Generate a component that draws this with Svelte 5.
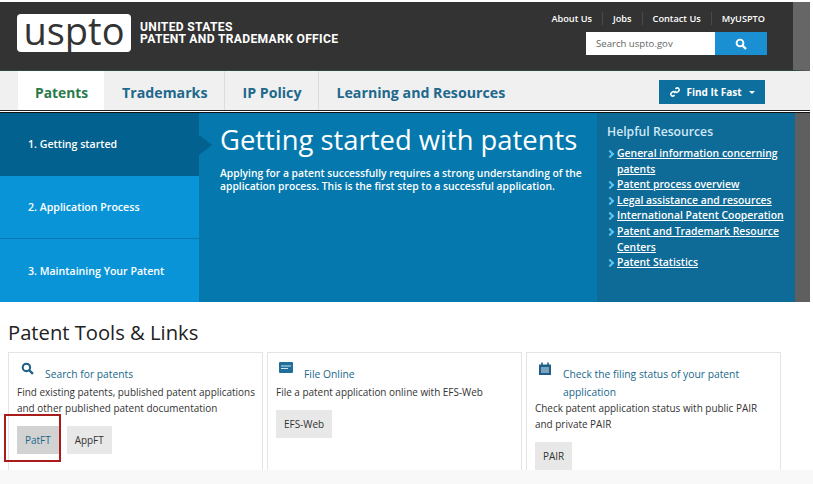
<script>
    const steps = ['1. Getting started', '2. Application Process', '3. Maintaining Your Patent'];
    const links = [
        'General information concerning patents',
        'Patent process overview',
        'Legal assistance and resources',
        'International Patent Cooperation',
        'Patent and Trademark Resource Centers',
        'Patent Statistics'
    ];
    const tabs = ['Trademarks', 'IP Policy', 'Learning and Resources'];
    const toplinks = ['About Us', 'Jobs', 'Contact Us', 'MyUSPTO'];
</script>

<div class="page">
    <header class="head">
        <div class="brand">
            <div class="logo">uspto</div>
            <div class="office">UNITED STATES<br>PATENT AND TRADEMARK OFFICE</div>
        </div>
        <div class="tools">
            <nav class="toplinks">
                {#each toplinks as t}
                    <span>{t}</span>
                {/each}
            </nav>
            <div class="search">
                <span class="field">Search uspto.gov</span>
                <span class="go">
                    <svg width="12" height="12" viewBox="0 0 12 12"><circle cx="5" cy="5" r="3.4" fill="none" stroke="#fff" stroke-width="1.9"/><path d="M7.6 7.6L11 11" stroke="#fff" stroke-width="2.2"/></svg>
                </span>
            </div>
        </div>
    </header>

    <nav class="tabs">
        <span class="tab active">Patents</span>
        {#each tabs as t}
            <span class="tab">{t}</span>
        {/each}
        <span class="find">
            <svg width="12" height="12" viewBox="0 0 12 12" fill="none" stroke="#fff" stroke-width="1.6"><path d="M5 7l2-2"/><path d="M6.5 3l1-1a2 2 0 0 1 2.6 2.6l-1.4 1.4a2 2 0 0 1-2.2.3"/><path d="M5.5 9l-1 1a2 2 0 0 1-2.6-2.6l1.4-1.4a2 2 0 0 1 2.2-.3"/></svg>
            Find It Fast
            <i class="caret"></i>
        </span>
    </nav>

    <section class="hero">
        <div class="steps">
            {#each steps as s, i}
                <div class="step" class:current={i === 0}>{s}</div>
            {/each}
        </div>
        <div class="intro">
            <h1>Getting started with patents</h1>
            <p>Applying for a patent successfully requires a strong understanding of the application process. This is the first step to a successful application.</p>
        </div>
        <aside class="help">
            <h2>Helpful Resources</h2>
            <ul>
                {#each links as l}
                    <li><a href="#top">{l}</a></li>
                {/each}
            </ul>
        </aside>
    </section>

    <section class="tools-sec">
        <h3>Patent Tools &amp; Links</h3>
        <div class="cards">
            <div class="card">
                <div class="title">
                    <span class="ico">
                        <svg width="13" height="13" viewBox="0 0 12 12"><circle cx="5" cy="5" r="3.4" fill="none" stroke="#1f5f8a" stroke-width="1.9"/><path d="M7.6 7.6L11 11" stroke="#1f5f8a" stroke-width="2.2"/></svg>
                    </span>
                    <span>Search for patents</span>
                </div>
                <p>Find existing patents, published patent applications and other published patent documentation</p>
                <div class="btns">
                    <span class="btn on">PatFT</span>
                    <span class="btn">AppFT</span>
                </div>
            </div>
            <div class="card">
                <div class="title">
                    <span class="ico">
                        <svg width="14" height="11" viewBox="0 0 14 11"><rect width="14" height="11" rx="1" fill="#1f6f9a"/><path d="M2 4h10M2 6.5h7" stroke="#cfe6f2" stroke-width="1"/></svg>
                    </span>
                    <span>File Online</span>
                </div>
                <p>File a patent application online with EFS-Web</p>
                <div class="btns">
                    <span class="btn">EFS-Web</span>
                </div>
            </div>
            <div class="card">
                <div class="title">
                    <span class="ico">
                        <svg width="12" height="13" viewBox="0 0 12 13"><path d="M0 2.5h12V13H0z" fill="#1f5f8a"/><path d="M3 0.5v3M9 0.5v3" stroke="#1f5f8a" stroke-width="1.6"/><path d="M2 6h8M2 8h8M2 10h8" stroke="#d5e6f0" stroke-width="1"/></svg>
                    </span>
                    <span>Check the filing status of your patent application</span>
                </div>
                <p class="tight">Check patent application status with public PAIR and private PAIR</p>
                <div class="btns">
                    <span class="btn">PAIR</span>
                </div>
            </div>
        </div>
        <div class="foot"></div>
    </section>

    <div class="redbox"></div>
</div>

<style>
    :global(body) {
        margin: 0;
        background: #fff;
    }
    .page {
        position: relative;
        width: 813px;
        height: 484px;
        overflow: hidden;
        background: #fff;
        padding-top: 2px;
        box-sizing: border-box;
        font-family: "Open Sans", "Liberation Sans", sans-serif;
    }
    .head {
        height: 68px;
        width: 793px;
        border-right: 17px solid #666;
        background: #333;
        border-bottom: 1px solid #2c4a3e;
        display: flex;
        justify-content: space-between;
    }
    .brand {
        display: flex;
        align-items: center;
        padding: 12px 0 0 17px;
        height: 38px;
        gap: 9px;
    }
    .logo {
        width: 114px;
        height: 38px;
        background: #fff;
        border-radius: 4px;
        color: #333;
        font-size: 38px;
        line-height: 33px;
        text-align: center;
        font-weight: 500;
        font-family: "Open Sans", sans-serif;
    }
    .office {
        color: #fff;
        font-family: "Roboto", sans-serif;
        font-size: 12.1px;
        font-weight: 700;
        line-height: 12.5px;
        letter-spacing: 0.33px;
    }
    .tools {
        padding: 10px 26px 0 0;
        display: flex;
        flex-direction: column;
        align-items: flex-end;
    }
    .toplinks {
        display: flex;
        color: #fff;
        font-size: 9.2px;
        font-weight: 600;
        line-height: 13px;
        margin-right: 2px;
    }
    .toplinks span {
        padding: 0 10px;
        border-left: 1px solid #4a4a4a;
    }
    .toplinks span:first-child {
        border-left: 0;
    }
    .toplinks span:last-child {
        padding-right: 0;
    }
    .search {
        display: flex;
        margin-top: 7px;
        height: 23px;
    }
    .field {
        width: 129px;
        background: #fff;
        color: #666;
        font-size: 9.6px;
        line-height: 24px;
        padding-left: 10px;
        box-sizing: border-box;
    }
    .go {
        width: 52px;
        background: #1a8fd1;
        display: flex;
        align-items: center;
        justify-content: center;
    }
    .tabs {
        height: 40px;
        width: 810px;
        padding-left: 18px;
        box-sizing: border-box;
        background: #f0f0f0;
        border-bottom: 1px solid #222;
        display: flex;
        position: relative;
    }
    .tab {
        font-size: 14.2px;
        font-weight: 700;
        color: #20688c;
        padding: 0 17px;
        line-height: 43px;
        border-right: 1px solid #dcdcdc;
    }
    .tab:nth-child(2) {
        padding-left: 18px;
    }
    .tab:nth-child(4) {
        border-right: 0;
    }
    .tab.active {
        background: #fff;
        color: #2a7a4b;
        font-size: 13.8px;
        padding: 0 16px 0 17px;
        border-right: 0;
    }
    .find {
        margin-left: auto;
        margin-right: 45px;
        margin-top: 9px;
        height: 24px;
        width: 106px;
        box-sizing: border-box;
        background: #0c6f9e;
        color: #fff;
        font-size: 10px;
        font-weight: 700;
        display: flex;
        align-items: center;
        justify-content: center;
        gap: 5px;
    }
    .caret {
        margin-left: 2px;
        border: 3px solid transparent;
        border-top-color: #fff;
        border-bottom: 0;
    }
    .hero {
        margin-top: 1px;
        height: 190px;
        width: 810px;
        display: flex;
        background: #0579ad;
        border-top: 1px solid #111;
        box-sizing: border-box;
        color: #fff;
    }
    .steps {
        width: 199px;
        display: flex;
        flex-direction: column;
    }
    .step {
        flex: 1;
        background: #0a94d8;
        font-size: 10.6px;
        font-weight: 600;
        display: flex;
        align-items: center;
        padding-left: 28px;
        border-bottom: 1px solid #0679b0;
        position: relative;
    }
    .step:last-child {
        border-bottom: 0;
    }
    .step.current {
        background: #03618f;
        border-bottom: 0;
    }
    .step.current::after {
        content: "";
        position: absolute;
        right: -13px;
        top: 22px;
        border: 10px solid transparent;
        border-left: 13px solid #03618f;
        border-right: 0;
    }
    .intro {
        width: 398px;
        padding: 8px 0 0 21px;
        box-sizing: border-box;
        background: #0579ad;
    }
    h1 {
        margin: 0;
        font-size: 27.4px;
        font-weight: 400;
        line-height: 38px;
        white-space: nowrap;
    }
    .intro p {
        margin: 8px 0 0;
        font-size: 10.3px;
        line-height: 13px;
        font-weight: 600;
    }
    .help {
        width: 213px;
        background: #0e6a96;
        padding: 11px 0 0 10px;
        box-sizing: border-box;
        border-right: 15px solid #5f5f5f;
    }
    h2 {
        margin: 0 0 6px;
        font-size: 12.2px;
        line-height: 16px;
        font-weight: 600;
        color: #cfe9f7;
    }
    ul {
        margin: 0;
        padding: 0;
        list-style: none;
    }
    li {
        position: relative;
        padding-left: 10px;
        font-size: 10.4px;
        font-weight: 600;
        line-height: 15.6px;
    }
    li::before {
        content: "";
        position: absolute;
        left: 0;
        top: 5px;
        width: 4px;
        height: 4px;
        border-top: 2px solid #5cc4f0;
        border-right: 2px solid #5cc4f0;
        transform: rotate(45deg);
    }
    li a {
        color: #fff;
    }
    .tools-sec {
        padding: 17px 0 0 8px;
    }
    h3 {
        margin: 0;
        font-size: 20.2px;
        line-height: 26px;
        font-weight: 400;
        color: #222;
    }
    .cards {
        display: flex;
        margin-top: 7px;
        gap: 4px;
    }
    .card {
        width: 255px;
        height: 130px;
        border: 1px solid #e4e4e4;
        padding: 12px 4px 0 8px;
        box-sizing: border-box;
        font-size: 9.95px;
        line-height: 16px;
        color: #333;
    }
    .title {
        display: flex;
        gap: 8px;
        color: #20688c;
        font-size: 10.3px;
        line-height: 18px;
        align-items: flex-start;
    }
    .ico {
        flex: 0 0 20px;
        width: 20px;
        height: 14px;
        display: flex;
        justify-content: center;
        margin-top: -3px;
    }
    .card p {
        margin: 1px 0 0;
    }
    .card p.tight {
        margin-top: -1px;
    }
    .btns {
        display: flex;
        gap: 8px;
        margin-top: 10px;
    }
    .btn {
        background: #e8e8e8;
        color: #333;
        height: 28px;
        line-height: 28px;
        padding: 0 8px;
    }
    .btn.on {
        background: #d2d2d2;
        color: #20688c;
    }
    .foot {
        position: absolute;
        left: 0;
        right: 0;
        bottom: 0;
        height: 14px;
        background: #f8f8f8;
    }
    .redbox {
        position: absolute;
        left: 4px;
        top: 414px;
        width: 53px;
        height: 44px;
        border: 2px solid #a81c1c;
    }
</style>
